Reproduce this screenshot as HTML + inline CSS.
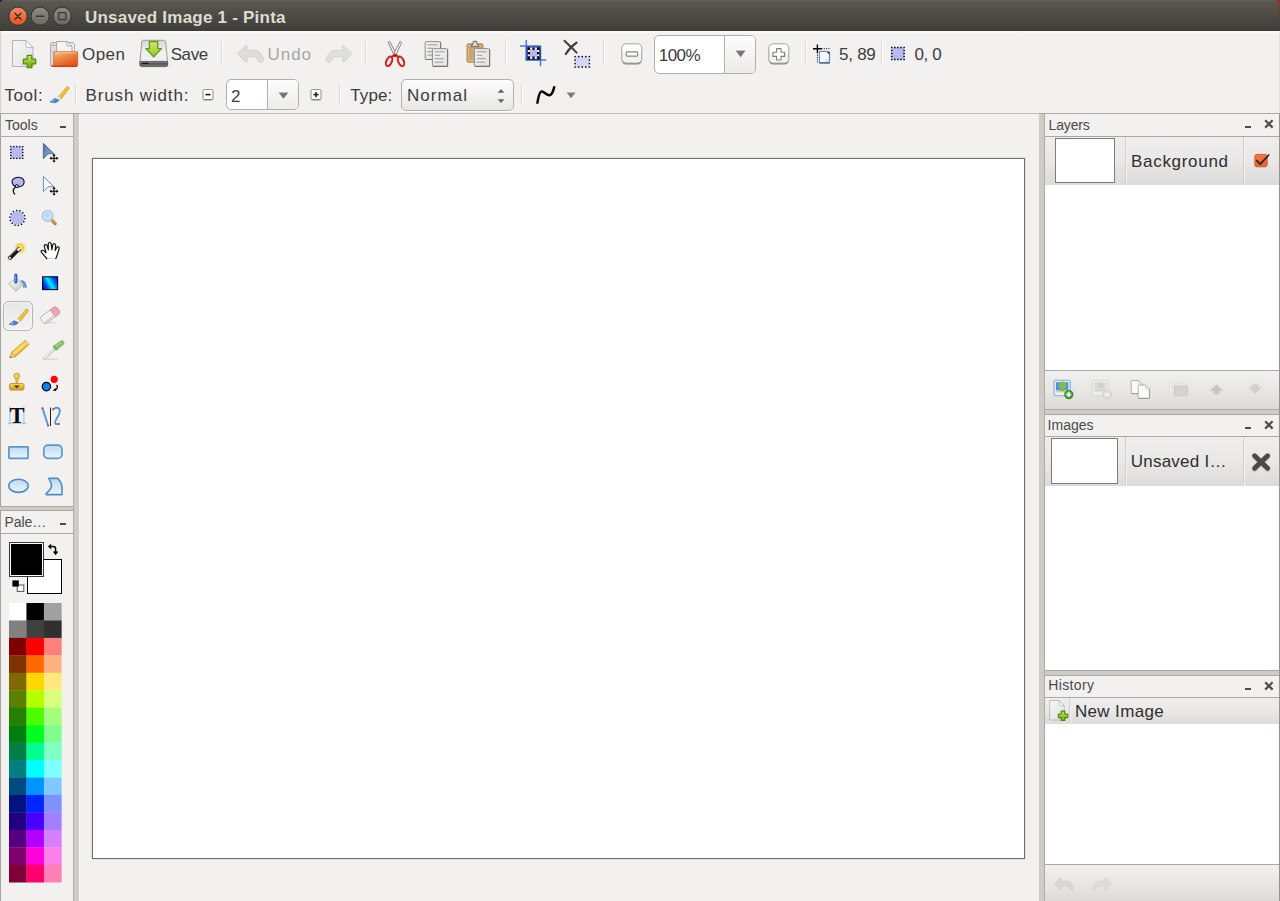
<!DOCTYPE html>
<html lang="en"><head><meta charset="utf-8"><title>Unsaved Image 1 - Pinta</title>
<style>
html,body{margin:0;padding:0;}
body{width:1280px;height:901px;overflow:hidden;background:#f2f1f0;font-family:"Liberation Sans", sans-serif;position:relative;}
#app{position:absolute;left:0;top:0;width:1280px;height:901px;overflow:hidden;background:#f2f1f0;}
#app div,#app svg,#app span{position:absolute;display:block;}
#app svg{overflow:visible;}
.t{white-space:nowrap;}
</style></head><body><div id="app">
<div style="left:0px;top:0px;width:1280px;height:31px;background:linear-gradient(#5b5950 0,#57554d 3px,#403f3a 28px,#3b3a36 29.5px,#302f2c 30px,#2d2c29 31px);border-top:1px solid #60625a;box-sizing:border-box;"></div>
<div style="left:0px;top:0px;width:3px;height:3px;background:radial-gradient(circle at 100% 100%, rgba(0,0,0,0) 0, rgba(0,0,0,0) 2.2px, #2c001e 3.4px);"></div>
<div style="left:1279.3px;top:0px;width:1px;height:31px;background:linear-gradient(#98302a,#6a3832 45%,#4a3e3a);"></div>
<div style="left:1275px;top:0px;width:5px;height:5px;background:radial-gradient(circle at 0% 100%, rgba(0,0,0,0) 0, rgba(0,0,0,0) 3.9px, #9c2e24 5.1px);"></div>
<svg style="left:0px;top:0px" width="80" height="31" viewBox="0 0 80 31"><defs><linearGradient id="g1" x1="0" y1="0" x2="0" y2="1"><stop offset="0" stop-color="#f28a66"/><stop offset="1" stop-color="#e6521b"/></linearGradient>
<linearGradient id="g2" x1="0" y1="0" x2="0" y2="1"><stop offset="0" stop-color="#8b8a82"/><stop offset="1" stop-color="#6a6963"/></linearGradient></defs><circle cx="18" cy="16.2" r="9.1" fill="url(#g1)" stroke="#2f3a36" stroke-width="1"/><path d="M15 13.2 L21 19.2 M21 13.2 L15 19.2" stroke="#3b2a22" stroke-width="1.35" stroke-linecap="round" fill="none"/><circle cx="40.1" cy="16.2" r="9.1" fill="url(#g2)" stroke="#33322e" stroke-width="1"/><circle cx="62.2" cy="16.2" r="9.1" fill="url(#g2)" stroke="#33322e" stroke-width="1"/><path d="M36.4 16.3 L43.8 16.3" stroke="#3a3935" stroke-width="1.5" stroke-linecap="round"/><rect x="58.6" y="12.7" width="7.2" height="7" fill="none" stroke="#3a3935" stroke-width="1.3" rx="0.5"/></svg>
<span class="t" style="left:84.96px;top:8px;font-size:17px;line-height:20px;color:#dfdbd2;letter-spacing:0.227px;font-weight:bold;">Unsaved Image 1 - Pinta</span>
<div style="left:0px;top:31px;width:1280px;height:3px;background:linear-gradient(#fdfdfd 0,#f8f8f7 1.2px,#f2f1f0 3px);"></div>
<div style="left:0px;top:31px;width:1px;height:83px;background:#d6d3d1;"></div>
<div style="left:0px;top:113.4px;width:1px;height:790px;background:#a39f9b;"></div>
<div style="left:1279.2px;top:31px;width:1px;height:83px;background:#eadfde;"></div>
<div style="left:1279.2px;top:113.4px;width:1px;height:790px;background:#9c918f;"></div>
<svg style="left:10px;top:38px" width="28" height="32" viewBox="0 0 28 32"><defs><linearGradient id="g3" x1="0" y1="0" x2="1" y2="1"><stop offset="0" stop-color="#f6f6f6"/><stop offset="1" stop-color="#e2e2e2"/></linearGradient></defs><path d="M2.5 2.5 H16.0 L23.0 9.5 V28.5 H2.5 Z" fill="url(#g3)" stroke="#b4b4b4" stroke-width="1" stroke-linejoin="round"/><path d="M16.0 2.5 V8.5 Q16.0 9.5 17.0 9.5 H23.0 Z" fill="#fdfdfd" stroke="#b4b4b4" stroke-width="0.9" stroke-linejoin="round"/><defs><linearGradient id="g4" x1="0" y1="0" x2="0" y2="1"><stop offset="0" stop-color="#c6e45c"/><stop offset="1" stop-color="#6fa511"/></linearGradient></defs><path d="M17.2 17.3 H21.8 V21.2 H25.7 V25.8 H21.8 V29.7 H17.2 V25.8 H13.3 V21.2 H17.2 Z" fill="url(#g4)" stroke="#4f8a0c" stroke-width="1.2" stroke-linejoin="round"/></svg>
<svg style="left:48px;top:38px" width="32" height="32" viewBox="0 0 32 32"><defs><linearGradient id="g5" x1="0" y1="0" x2="0.6" y2="1"><stop offset="0" stop-color="#f6c98c"/><stop offset="0.45" stop-color="#ec8a4a"/><stop offset="1" stop-color="#e8531c"/></linearGradient>
<linearGradient id="g6" x1="0" y1="0" x2="1" y2="0"><stop offset="0" stop-color="#d8d8d8"/><stop offset="1" stop-color="#f4f4f4"/></linearGradient></defs><path d="M2.5 6 Q2.5 4.5 4 4.5 H24 Q26.5 4.5 26.5 7 V28 H2.5 Z" fill="url(#g6)" stroke="#b0b0b0" stroke-width="1"/><path d="M4.2 7.3 H7.5" stroke="#f0a040" stroke-width="1.2"/><path d="M8.5 3.5 H19 L24 8 V20 H8.5 Z" fill="#f4f4f4" stroke="#a8a8a8" stroke-width="1" stroke-linejoin="round"/><path d="M19 3.5 V8 H24 Z" fill="#fff" stroke="#a8a8a8" stroke-width="0.9" stroke-linejoin="round"/><path d="M5.8 13.8 H29.6 V27.2 Q29.6 28.4 28.4 28.4 H4 Q5.8 27 5.8 25 Z" fill="url(#g5)" stroke="#e0561e" stroke-width="0.8"/><path d="M3.6 28.2 H29" stroke="#d43a10" stroke-width="1.3"/><path d="M6.8 14.8 H28.6" stroke="#f9d9a8" stroke-width="0.9" opacity="0.9"/></svg>
<span class="t" style="left:82.06px;top:45px;font-size:17px;line-height:20px;color:#3c3c3c;letter-spacing:0.44px;font-weight:normal;">Open</span>
<svg style="left:138px;top:38px" width="32" height="32" viewBox="0 0 32 32"><defs><linearGradient id="g7" x1="0" y1="0" x2="0" y2="1"><stop offset="0" stop-color="#d8d8d6"/><stop offset="0.6" stop-color="#f2f2f0"/><stop offset="1" stop-color="#e4e4e2"/></linearGradient>
<linearGradient id="g8" x1="0" y1="0" x2="0" y2="1"><stop offset="0" stop-color="#aaa"/><stop offset="0.35" stop-color="#555"/><stop offset="1" stop-color="#777"/></linearGradient>
<linearGradient id="g9" x1="0" y1="0" x2="0" y2="1"><stop offset="0" stop-color="#cfe86a"/><stop offset="1" stop-color="#93c520"/></linearGradient></defs><path d="M5.2 2.3 H26.2 Q27.4 2.3 27.6 3.5 L29.6 23.6 H1.9 L3.9 3.5 Q4.1 2.3 5.2 2.3 Z" fill="url(#g7)" stroke="#9c9c9a" stroke-width="1"/><path d="M1.8 23.6 H29.7 V26.8 Q29.7 28.6 27.9 28.6 H3.6 Q1.8 28.6 1.8 26.8 Z" fill="url(#g8)" stroke="#4c4c4c" stroke-width="0.8"/><path d="M4.5 25.4 H10" stroke="#111" stroke-width="1.4" stroke-linecap="round"/><path d="M4 19 Q15.7 23 27.5 19" stroke="#fff" stroke-width="1.2" fill="none" opacity="0.8"/><path d="M11.4 3.6 H19.8 V10.6 H23.4 L15.7 18.9 L7.8 10.6 H11.4 Z" fill="url(#g9)" stroke="#5e9c12" stroke-width="1.3" stroke-linejoin="round"/></svg>
<span class="t" style="left:170.72px;top:45px;font-size:17px;line-height:20px;color:#3c3c3c;letter-spacing:-0.44px;font-weight:normal;">Save</span>
<div style="left:221px;top:41px;width:1px;height:23px;background:#dcdad7;"></div>
<div style="left:222px;top:41px;width:1px;height:23px;background:#fbfbfa;"></div>
<svg style="left:236px;top:42px" width="28" height="24" viewBox="0 0 28 24"><g transform="scale(1)"><path d="M1.6 11.7 L9.6 3.6 Q11 2.6 11 4.6 V8.2 H18.5 Q22.4 8.2 24.4 11.4 L27.4 16.3 Q28.6 18.8 26.2 20.2 Q23.6 21.3 22.2 19 L19.8 15.2 Q19.4 14.8 18.6 14.8 H11 V19 Q11 21 9.6 19.9 Z" fill="#dfdcd9" stroke="#d2cfcb" stroke-width="1" stroke-linejoin="round"/></g></svg>
<span class="t" style="left:267.6px;top:45px;font-size:17px;line-height:20px;color:#a8a6a3;letter-spacing:0.9px;font-weight:normal;">Undo</span>
<svg style="left:324px;top:42px" width="30" height="24" viewBox="0 0 30 24"><g transform="scale(1) translate(29.6,0) scale(-1,1)"><path d="M1.6 11.7 L9.6 3.6 Q11 2.6 11 4.6 V8.2 H18.5 Q22.4 8.2 24.4 11.4 L27.4 16.3 Q28.6 18.8 26.2 20.2 Q23.6 21.3 22.2 19 L19.8 15.2 Q19.4 14.8 18.6 14.8 H11 V19 Q11 21 9.6 19.9 Z" fill="#dfe0db" stroke="#d3d5cf" stroke-width="1" stroke-linejoin="round"/></g></svg>
<div style="left:365px;top:41px;width:1px;height:23px;background:#dcdad7;"></div>
<div style="left:366px;top:41px;width:1px;height:23px;background:#fbfbfa;"></div>
<svg style="left:382px;top:38px" width="26" height="32" viewBox="0 0 26 32"><path d="M6.2 4.6 L7.5 3.1 L15.4 17.8 L13 19 Z" fill="#ececec" stroke="#7c7c7a" stroke-width="0.9" stroke-linejoin="round"/><path d="M19.6 4.6 L18.3 3.1 L10.6 17.8 L13 19 Z" fill="#f4f4f4" stroke="#7c7c7a" stroke-width="0.9" stroke-linejoin="round"/><ellipse cx="7.1" cy="23.3" rx="2.7" ry="5" fill="none" stroke="#cc2424" stroke-width="2.1" transform="rotate(24 7.1 23.3)"/><ellipse cx="19" cy="23.3" rx="2.7" ry="5" fill="none" stroke="#cc2424" stroke-width="2.1" transform="rotate(-24 19 23.3)"/><path d="M9.6 19.2 L13 16.6 L16.6 19.2" fill="none" stroke="#cc2424" stroke-width="2.2" stroke-linejoin="round" stroke-linecap="round"/><circle cx="13.1" cy="17.6" r="1.1" fill="#a81c1c"/></svg>
<svg style="left:422px;top:38px" width="28" height="32" viewBox="0 0 28 32"><defs><linearGradient id="g10" x1="0" y1="0" x2="1" y2="1"><stop offset="0" stop-color="#f3f3f3"/><stop offset="1" stop-color="#e2e2e2"/></linearGradient></defs><rect x="3.2" y="3.7" width="15.4" height="17.8" rx="1" fill="url(#g10)" stroke="#8a8a88" stroke-width="1"/><path d="M3.7 21.5 H18.6 V4.2" stroke="#6e6e6c" stroke-width="1.1" fill="none" opacity="0.8"/><path d="M5.4 6.80 H15.66" stroke="#8e8e8e" stroke-width="0.9"/><path d="M5.4 10.25 H11.10" stroke="#8e8e8e" stroke-width="0.9"/><path d="M5.4 13.70 H14.75" stroke="#8e8e8e" stroke-width="0.9"/><path d="M5.4 17.15 H13.84" stroke="#8e8e8e" stroke-width="0.9"/><defs><linearGradient id="g11" x1="0" y1="0" x2="1" y2="1"><stop offset="0" stop-color="#f3f3f3"/><stop offset="1" stop-color="#e2e2e2"/></linearGradient></defs><rect x="10.4" y="10.7" width="15.2" height="17.7" rx="1" fill="url(#g11)" stroke="#8a8a88" stroke-width="1"/><path d="M10.9 28.4 H25.6 V11.2" stroke="#6e6e6c" stroke-width="1.1" fill="none" opacity="0.8"/><path d="M12.600000000000001 13.80 H22.68" stroke="#8e8e8e" stroke-width="0.9"/><path d="M12.600000000000001 17.25 H18.20" stroke="#8e8e8e" stroke-width="0.9"/><path d="M12.600000000000001 20.70 H21.78" stroke="#8e8e8e" stroke-width="0.9"/><path d="M12.600000000000001 24.15 H20.89" stroke="#8e8e8e" stroke-width="0.9"/></svg>
<svg style="left:464px;top:38px" width="28" height="32" viewBox="0 0 28 32"><defs><linearGradient id="g12" x1="0" y1="0" x2="1" y2="0"><stop offset="0" stop-color="#c69a62"/><stop offset="0.5" stop-color="#d2ac7a"/><stop offset="1" stop-color="#bf935a"/></linearGradient></defs><rect x="3" y="5.8" width="16" height="18.4" rx="1.2" fill="url(#g12)" stroke="#b58a50" stroke-width="1"/><rect x="4.6" y="7.4" width="12.8" height="15.2" fill="none" stroke="#e2c69c" stroke-width="0.7"/><path d="M7.4 8.6 V7 H8.6 L9.4 3.4 H12.6 L13.4 7 H14.6 V8.6 Z" fill="#d8d8d8" stroke="#7a7a7a" stroke-width="1.1" stroke-linejoin="round"/><defs><linearGradient id="g13" x1="0" y1="0" x2="1" y2="1"><stop offset="0" stop-color="#f3f3f3"/><stop offset="1" stop-color="#e2e2e2"/></linearGradient></defs><rect x="10.4" y="10.7" width="15.2" height="17.7" rx="1" fill="url(#g13)" stroke="#8a8a88" stroke-width="1"/><path d="M10.9 28.4 H25.6 V11.2" stroke="#6e6e6c" stroke-width="1.1" fill="none" opacity="0.8"/><path d="M12.600000000000001 13.80 H22.68" stroke="#8e8e8e" stroke-width="0.9"/><path d="M12.600000000000001 17.25 H18.20" stroke="#8e8e8e" stroke-width="0.9"/><path d="M12.600000000000001 20.70 H21.78" stroke="#8e8e8e" stroke-width="0.9"/><path d="M12.600000000000001 24.15 H20.89" stroke="#8e8e8e" stroke-width="0.9"/></svg>
<div style="left:505px;top:41px;width:1px;height:23px;background:#dcdad7;"></div>
<div style="left:506px;top:41px;width:1px;height:23px;background:#fbfbfa;"></div>
<svg style="left:518px;top:38px" width="30" height="32" viewBox="0 0 30 32"><path d="M8.3 2 V22.4 M2 8.1 H23" stroke="#4a7ae0" stroke-width="1.5" fill="none"/><path d="M22.5 8 V28.3 M8.3 22.1 H28.3" stroke="#4a7ae0" stroke-width="1.5" fill="none"/><rect x="8.4" y="8.2" width="14.2" height="14" fill="#16357f"/><path d="M7.6 8.9 H22.6 M8.3 8.9 V22.4" stroke="#3a66c8" stroke-width="1.2" fill="none"/><rect x="9.8" y="9.6" width="11.4" height="11.2" fill="#fff"/><rect x="11.6" y="11.4" width="7.8" height="7.6" fill="#b4b4f8"/><rect x="9.75" y="9.55" width="2.3" height="2.3" fill="#000"/><rect x="9.75" y="18.55" width="2.3" height="2.3" fill="#000"/><rect x="14.35" y="9.55" width="2.3" height="2.3" fill="#000"/><rect x="14.35" y="18.55" width="2.3" height="2.3" fill="#000"/><rect x="18.95" y="9.55" width="2.3" height="2.3" fill="#000"/><rect x="18.95" y="18.55" width="2.3" height="2.3" fill="#000"/><rect x="9.75" y="14.05" width="2.3" height="2.3" fill="#000"/><rect x="18.95" y="14.05" width="2.3" height="2.3" fill="#000"/><rect x="9.75" y="9.55" width="2.3" height="2.3" fill="#000"/><rect x="9.75" y="18.55" width="2.3" height="2.3" fill="#000"/><rect x="18.95" y="9.55" width="2.3" height="2.3" fill="#000"/><rect x="18.95" y="18.55" width="2.3" height="2.3" fill="#000"/></svg>
<svg style="left:562px;top:38px" width="30" height="32" viewBox="0 0 30 32"><path d="M2.4 2.8 Q7 7 14.6 14.6" stroke="#3e3e3e" stroke-width="2" stroke-linecap="round" fill="none"/><path d="M14.6 4.6 Q8 9 3.8 16" stroke="#3e3e3e" stroke-width="2.2" stroke-linecap="round" fill="none"/><rect x="13.06" y="18.6" width="14.34" height="10.46" fill="#d6d6f4"/><rect x="12.34" y="17.88" width="1.45" height="1.45" fill="#000"/><rect x="12.34" y="28.33" width="1.45" height="1.45" fill="#000"/><rect x="15.92" y="17.88" width="1.45" height="1.45" fill="#000"/><rect x="15.92" y="28.33" width="1.45" height="1.45" fill="#000"/><rect x="19.50" y="17.88" width="1.45" height="1.45" fill="#000"/><rect x="19.50" y="28.33" width="1.45" height="1.45" fill="#000"/><rect x="23.09" y="17.88" width="1.45" height="1.45" fill="#000"/><rect x="23.09" y="28.33" width="1.45" height="1.45" fill="#000"/><rect x="26.67" y="17.88" width="1.45" height="1.45" fill="#000"/><rect x="26.67" y="28.33" width="1.45" height="1.45" fill="#000"/><rect x="12.34" y="21.36" width="1.45" height="1.45" fill="#000"/><rect x="26.67" y="21.36" width="1.45" height="1.45" fill="#000"/><rect x="12.34" y="24.85" width="1.45" height="1.45" fill="#000"/><rect x="26.67" y="24.85" width="1.45" height="1.45" fill="#000"/></svg>
<div style="left:603px;top:41px;width:1px;height:23px;background:#dcdad7;"></div>
<div style="left:604px;top:41px;width:1px;height:23px;background:#fbfbfa;"></div>
<svg style="left:620px;top:42px" width="24" height="24" viewBox="0 0 24 24"><defs><linearGradient id="g14" x1="0" y1="0" x2="0" y2="1"><stop offset="0" stop-color="#ffffff"/><stop offset="0.5" stop-color="#fbfbfa"/><stop offset="0.55" stop-color="#efefed"/><stop offset="1" stop-color="#f6f6f5"/></linearGradient></defs><rect x="1.8" y="2.8" width="20" height="19.6" rx="4.2" fill="#787874" opacity="0.85"/><rect x="1.8" y="1.8" width="20" height="19.2" rx="4.2" fill="url(#g14)" stroke="#a4a4a0" stroke-width="1"/><rect x="6.2" y="9.9" width="11.4" height="4.2" rx="0.8" fill="#fff" stroke="#868684" stroke-width="1.1"/></svg>
<div style="left:654px;top:34.7px;width:102px;height:39px;border:1px solid #b3afa9;border-radius:5px;background:#fff;box-sizing:border-box;overflow:hidden;"><div style="left:69px;top:0;width:32px;height:37px;border-left:1px solid #b3afa9;background:linear-gradient(#fdfdfd,#ecebe9);"></div></div>
<span class="t" style="left:658.78px;top:46px;font-size:17px;line-height:20px;color:#3c3c3c;letter-spacing:-0.54px;font-weight:normal;">100%</span>
<svg style="left:735px;top:50px" width="12" height="9" viewBox="0 0 12 9"><path d="M0.8 0.8 H10.4 L5.6 7.2 Z" fill="#767676"/><path d="M0.8 0.8 H10.4" stroke="#9a9a9a" stroke-width="0.8" opacity="0.7"/></svg>
<svg style="left:767px;top:42px" width="24" height="24" viewBox="0 0 24 24"><defs><linearGradient id="g15" x1="0" y1="0" x2="0" y2="1"><stop offset="0" stop-color="#ffffff"/><stop offset="0.5" stop-color="#fbfbfa"/><stop offset="0.55" stop-color="#efefed"/><stop offset="1" stop-color="#f6f6f5"/></linearGradient></defs><rect x="1.8" y="2.8" width="20" height="19.6" rx="4.2" fill="#787874" opacity="0.85"/><rect x="1.8" y="1.8" width="20" height="19.2" rx="4.2" fill="url(#g15)" stroke="#a4a4a0" stroke-width="1"/><path d="M9.6 6.6 H14 V10.2 H17.6 V14.4 H14 V18 H9.6 V14.4 H6 V10.2 H9.6 Z" fill="#fff" stroke="#7e7e7c" stroke-width="1.1" stroke-linejoin="round"/></svg>
<div style="left:805px;top:41px;width:1px;height:23px;background:#dcdad7;"></div>
<div style="left:806px;top:41px;width:1px;height:23px;background:#fbfbfa;"></div>
<svg style="left:812px;top:42px" width="20" height="24" viewBox="0 0 20 24"><defs><linearGradient id="g16" x1="0" y1="0" x2="1" y2="1"><stop offset="0" stop-color="#fff"/><stop offset="0.6" stop-color="#f4f6fa"/><stop offset="1" stop-color="#c8d4e8"/></linearGradient></defs><path d="M5.4 10.5 V20.5" stroke="#000" stroke-width="1" stroke-dasharray="1 1.3"/><path d="M9.5 6.75 H18.8" stroke="#000" stroke-width="1" stroke-dasharray="1 1.3"/><path d="M1 6.75 H9.8 M5.4 2.6 V10.8" stroke="#000" stroke-width="1.4"/><path d="M7.4 9.4 H14.6 L17.6 12.4 V20.8 H7.4 Z" fill="url(#g16)" stroke="#5b7bab" stroke-width="1"/><path d="M14.4 9.4 L17.8 12.8 V10.4 Q17.8 9.4 16.8 9.4 Z" fill="#1e3a6e"/><path d="M7.4 21 H17.8" stroke="#3e5e92" stroke-width="1.2"/></svg>
<span class="t" style="left:838.92px;top:45px;font-size:17px;line-height:20px;color:#3c3c3c;letter-spacing:-0.226px;font-weight:normal;">5, 89</span>
<div style="left:881px;top:41px;width:1px;height:23px;background:#dcdad7;"></div>
<div style="left:882px;top:41px;width:1px;height:23px;background:#fbfbfa;"></div>
<svg style="left:889px;top:44px" width="18" height="18" viewBox="0 0 18 18"><rect x="1.9500000000000002" y="2.75" width="13.9" height="13.5" fill="#f8f8fc"/><rect x="2.7" y="3.5" width="12.4" height="12" fill="#b8b8f6"/><rect x="1.95" y="2.75" width="1.5" height="1.5" fill="#000"/><rect x="1.95" y="14.75" width="1.5" height="1.5" fill="#000"/><rect x="5.05" y="2.75" width="1.5" height="1.5" fill="#000"/><rect x="5.05" y="14.75" width="1.5" height="1.5" fill="#000"/><rect x="8.15" y="2.75" width="1.5" height="1.5" fill="#000"/><rect x="8.15" y="14.75" width="1.5" height="1.5" fill="#000"/><rect x="11.25" y="2.75" width="1.5" height="1.5" fill="#000"/><rect x="11.25" y="14.75" width="1.5" height="1.5" fill="#000"/><rect x="14.35" y="2.75" width="1.5" height="1.5" fill="#000"/><rect x="14.35" y="14.75" width="1.5" height="1.5" fill="#000"/><rect x="1.95" y="5.75" width="1.5" height="1.5" fill="#000"/><rect x="14.35" y="5.75" width="1.5" height="1.5" fill="#000"/><rect x="1.95" y="8.75" width="1.5" height="1.5" fill="#000"/><rect x="14.35" y="8.75" width="1.5" height="1.5" fill="#000"/><rect x="1.95" y="11.75" width="1.5" height="1.5" fill="#000"/><rect x="14.35" y="11.75" width="1.5" height="1.5" fill="#000"/></svg>
<span class="t" style="left:914.52px;top:45px;font-size:17px;line-height:20px;color:#3c3c3c;letter-spacing:-0.4px;font-weight:normal;">0, 0</span>
<span class="t" style="left:4.4px;top:86px;font-size:17px;line-height:20px;color:#3c3c3c;letter-spacing:0.6px;font-weight:normal;">Tool:</span>
<svg style="left:48px;top:84px" width="24" height="22" viewBox="0 0 24 22"><defs><linearGradient id="g17" x1="0" y1="0" x2="1" y2="1"><stop offset="0" stop-color="#f8e684"/><stop offset="0.5" stop-color="#ecc53a"/><stop offset="1" stop-color="#d2a018"/></linearGradient></defs><g transform="translate(2,2.8)"><path d="M17 -0.2 Q19.2 -0.5 19 1.9 L11 12.3 L8.6 9.9 Z" fill="url(#g17)" stroke="#c99a1c" stroke-width="0.7" stroke-linejoin="round"/><path d="M8.6 9.9 L11 12.3 L9.2 13.3 L4.6 11.7 Q6.5 10.3 8.6 9.9 Z" fill="#f6f4ec" stroke="#d2cebe" stroke-width="0.5"/><path d="M4.4 11.6 L9.2 13.2 Q7.6 15.5 5.5 15.9 L0.5 15.4 Q-0.4 15.2 0.5 14.6 Q2.6 13.4 4.4 11.6 Z" fill="#4a80cc" stroke="#3c6cb4" stroke-width="0.6" stroke-linejoin="round"/><path d="M4.6 12.8 Q3.4 14 1.8 14.8" stroke="#a4c6ee" stroke-width="1" fill="none"/></g></svg>
<div style="left:75px;top:84px;width:1px;height:20px;background:#dcdad7;"></div>
<div style="left:76px;top:84px;width:1px;height:20px;background:#fbfbfa;"></div>
<span class="t" style="left:85.6px;top:86px;font-size:17px;line-height:20px;color:#3c3c3c;letter-spacing:0.845px;font-weight:normal;">Brush width:</span>
<svg style="left:202px;top:88px" width="12" height="13" viewBox="0 0 12 13"><rect x="1" y="1.6" width="10" height="10" rx="1.2" fill="#fff" stroke="#8e8e8c" stroke-width="1"/><path d="M1.4 11.9 H10.6" stroke="#6e6e6c" stroke-width="0.8"/><path d="M3.4 6.6 H8.6" stroke="#222" stroke-width="1.6"/></svg>
<div style="left:226px;top:78.6px;width:73px;height:31.8px;border:1px solid #b3afa9;border-radius:5px;background:#fff;box-sizing:border-box;overflow:hidden;"><div style="left:40px;top:0;width:32px;height:30px;border-left:1px solid #b3afa9;background:linear-gradient(#fdfdfd,#ecebe9);"></div></div>
<span class="t" style="left:231.0px;top:87px;font-size:17px;line-height:20px;color:#3c3c3c;letter-spacing:-1.44px;font-weight:normal;">2</span>
<svg style="left:278px;top:92px" width="12" height="8" viewBox="0 0 12 8"><path d="M0.8 0.8 H10.200000000000001 L5.5 6.8 Z" fill="#767676"/><path d="M0.8 0.8 H10.200000000000001" stroke="#9a9a9a" stroke-width="0.8" opacity="0.7"/></svg>
<svg style="left:310px;top:88px" width="12" height="13" viewBox="0 0 12 13"><rect x="1" y="1.6" width="10" height="10" rx="1.2" fill="#fff" stroke="#8e8e8c" stroke-width="1"/><path d="M1.4 11.9 H10.6" stroke="#6e6e6c" stroke-width="0.8"/><path d="M3.4 6.6 H8.6" stroke="#222" stroke-width="1.6"/><path d="M6 4 V9.2" stroke="#222" stroke-width="1.6"/></svg>
<div style="left:339px;top:84px;width:1px;height:20px;background:#dcdad7;"></div>
<div style="left:340px;top:84px;width:1px;height:20px;background:#fbfbfa;"></div>
<span class="t" style="left:350.29px;top:86px;font-size:17px;line-height:20px;color:#3c3c3c;letter-spacing:0.075px;font-weight:normal;">Type:</span>
<div style="left:401px;top:78.6px;width:113px;height:32px;border:1px solid #b3afa9;border-radius:5px;background:linear-gradient(#fefefe,#f0efed 60%,#e9e8e6);box-sizing:border-box;box-shadow:0 1px 0 #fff;"></div>
<span class="t" style="left:406.90000000000003px;top:86px;font-size:17px;line-height:20px;color:#3c3c3c;letter-spacing:1.08px;font-weight:normal;">Normal</span>
<svg style="left:496px;top:88px" width="10" height="16" viewBox="0 0 10 16"><path d="M1.6 4.8 L5 1 L8.4 4.8 Z" fill="#666"/><path d="M1.6 11.2 L5 15 L8.4 11.2 Z" fill="#666"/></svg>
<div style="left:521px;top:84px;width:1px;height:20px;background:#dcdad7;"></div>
<div style="left:522px;top:84px;width:1px;height:20px;background:#fbfbfa;"></div>
<svg style="left:534px;top:84px" width="24" height="22" viewBox="0 0 24 22"><path d="M3.4 18.7 C4.4 14 5 8 7.6 7.4 C10 7 12.6 11.6 15.6 11.2 C18.6 10.6 19.4 6 20.2 3.2" fill="none" stroke="#0a0a0a" stroke-width="2.5" stroke-linecap="round" stroke-linejoin="round"/></svg>
<svg style="left:566px;top:92px" width="10" height="7" viewBox="0 0 10 7"><path d="M0.8 0.8 H9.3 L5.05 6.3 Z" fill="#7a7a7a"/><path d="M0.8 0.8 H9.3" stroke="#9a9a9a" stroke-width="0.8" opacity="0.7"/></svg>
<div style="left:0px;top:113.4px;width:80px;height:1px;background:#aca8a3;"></div>
<div style="left:80px;top:113.4px;width:959px;height:1px;background:#c4c0bc;"></div>
<div style="left:1039px;top:113.4px;width:241px;height:1px;background:#aca8a3;"></div>
<div style="left:73px;top:114px;width:6px;height:787px;background:#cfcbc7;border-left:1px solid #b3aeaa;box-sizing:border-box;"></div>
<div style="left:79px;top:114px;width:1px;height:787px;background:#f8f7f7;"></div>
<div style="left:1039px;top:114px;width:6px;height:787px;background:#cfcbc7;border-right:1px solid #b0aba7;box-sizing:border-box;"></div>
<div style="left:0px;top:135.5px;width:73px;height:1px;background:#aca8a3;z-index:3;"></div>
<span class="t" style="left:4.92px;top:117px;font-size:14px;line-height:17px;color:#4a4a4a;letter-spacing:0.045px;font-weight:normal;">Tools</span>
<div style="left:60.4px;top:126.2px;width:5.8px;height:2.2px;background:#4c4c4c;"></div>
<div style="left:0px;top:506px;width:74px;height:1px;background:#aca8a3;"></div>
<div style="left:0px;top:507px;width:73px;height:3px;background:#cfcbc7;"></div>
<div style="left:0px;top:510px;width:74px;height:1px;background:#aca8a3;"></div>
<div style="left:0px;top:532.5px;width:73px;height:1px;background:#aca8a3;z-index:3;"></div>
<span class="t" style="left:4.5px;top:514px;font-size:14px;line-height:17px;color:#4a4a4a;letter-spacing:-0.075px;font-weight:normal;">Pale…</span>
<div style="left:60.4px;top:523.2px;width:5.8px;height:2.2px;background:#4c4c4c;"></div>
<div style="left:2.5px;top:301px;width:30.5px;height:29.8px;border:1.2px solid #b9b5b0;border-radius:5.5px;background:linear-gradient(#e9e8e6,#efeeec 60%,#f2f1f0);box-sizing:border-box;box-shadow:inset 0 0 0 1px rgba(255,255,255,0.45);"></div>
<svg style="left:5px;top:140px" width="24" height="24" viewBox="0 0 24 24"><rect x="5.125" y="5.925" width="13.35" height="13.15" fill="#f8f8fc"/><rect x="5.8" y="6.6" width="12" height="11.8" fill="#b8b8f2"/><rect x="5.12" y="5.92" width="1.35" height="1.35" fill="#000"/><rect x="5.12" y="17.72" width="1.35" height="1.35" fill="#000"/><rect x="8.12" y="5.92" width="1.35" height="1.35" fill="#000"/><rect x="8.12" y="17.72" width="1.35" height="1.35" fill="#000"/><rect x="11.12" y="5.92" width="1.35" height="1.35" fill="#000"/><rect x="11.12" y="17.72" width="1.35" height="1.35" fill="#000"/><rect x="14.12" y="5.92" width="1.35" height="1.35" fill="#000"/><rect x="14.12" y="17.72" width="1.35" height="1.35" fill="#000"/><rect x="17.12" y="5.92" width="1.35" height="1.35" fill="#000"/><rect x="17.12" y="17.72" width="1.35" height="1.35" fill="#000"/><rect x="5.12" y="8.87" width="1.35" height="1.35" fill="#000"/><rect x="17.12" y="8.87" width="1.35" height="1.35" fill="#000"/><rect x="5.12" y="11.82" width="1.35" height="1.35" fill="#000"/><rect x="17.12" y="11.82" width="1.35" height="1.35" fill="#000"/><rect x="5.12" y="14.77" width="1.35" height="1.35" fill="#000"/><rect x="17.12" y="14.77" width="1.35" height="1.35" fill="#000"/></svg>
<svg style="left:38px;top:140px" width="24" height="24" viewBox="0 0 24 24"><defs><linearGradient id="g18" x1="0" y1="0" x2="1" y2="1"><stop offset="0" stop-color="#4f739f"/><stop offset="1" stop-color="#9fb5d0"/></linearGradient></defs><path d="M5.3999999999999995 3.4 L15.8 13.6 L10.0 13.8 L5.3999999999999995 18.6 Z" fill="url(#g18)" stroke="#4a6c98" stroke-width="1" stroke-linejoin="round"/><path d="M12.4 18.2 H19.6 M16 14.6 V21.8" stroke="#000" stroke-width="1.1"/><path d="M20.4 18.2 L18.5 16.5 V19.9 Z" fill="#000"/><path d="M11.6 18.2 L13.5 16.5 V19.9 Z" fill="#000"/><path d="M16.0 22.6 L14.3 20.700000000000003 H17.7 Z" fill="#000"/><path d="M16.0 13.799999999999999 L14.3 15.7 H17.7 Z" fill="#000"/></svg>
<svg style="left:5px;top:173px" width="24" height="24" viewBox="0 0 24 24"><path d="M7.2 10.2 Q6.4 6.6 10 5 Q13.4 3.4 16.6 5 Q19.6 6.6 19 10 Q18.6 12.6 15.6 13.6 Q13 14.6 10.8 13.4 Q7.8 12.6 7.2 10.2 Z" fill="#b6b6f4" stroke="#111" stroke-width="1.1"/><circle cx="11.9" cy="13.1" r="1.5" fill="#dcdcfa" stroke="#111" stroke-width="1"/><path d="M10.6 14 Q7.6 16 8.4 18.6 Q8.8 20 9.6 21" fill="none" stroke="#111" stroke-width="1.3" stroke-linecap="round"/></svg>
<svg style="left:38px;top:173px" width="24" height="24" viewBox="0 0 24 24"><path d="M5.3999999999999995 3.4 L15.8 13.6 L10.0 13.8 L5.3999999999999995 18.6 Z" fill="#fff" stroke="#6d8db8" stroke-width="1" stroke-linejoin="round"/><path d="M12.4 18.2 H19.6 M16 14.6 V21.8" stroke="#000" stroke-width="1.1"/><path d="M20.4 18.2 L18.5 16.5 V19.9 Z" fill="#000"/><path d="M11.6 18.2 L13.5 16.5 V19.9 Z" fill="#000"/><path d="M16.0 22.6 L14.3 20.700000000000003 H17.7 Z" fill="#000"/><path d="M16.0 13.799999999999999 L14.3 15.7 H17.7 Z" fill="#000"/></svg>
<svg style="left:5px;top:206px" width="24" height="24" viewBox="0 0 24 24"><circle cx="12.4" cy="12" r="7.6" fill="#b8b8f2"/><circle cx="12.4" cy="12" r="7.5" fill="none" stroke="#f4f3f8" stroke-width="1.3"/><circle cx="12.4" cy="12" r="7.5" fill="none" stroke="#000" stroke-width="1.35" stroke-dasharray="1.4 1.965"/></svg>
<svg style="left:38px;top:206px" width="24" height="24" viewBox="0 0 24 24"><defs><radialGradient id="g19" cx="0.45" cy="0.4" r="0.6"><stop offset="0" stop-color="#b7d4f0"/><stop offset="0.7" stop-color="#cfe2f6"/><stop offset="1" stop-color="#a9cbee"/></radialGradient></defs><path d="M14.2 14.4 L17.2 17.6" stroke="#c07a28" stroke-width="3.2" stroke-linecap="round"/><path d="M14.4 14 L17.2 17" stroke="#e0a860" stroke-width="1.1" stroke-linecap="round"/><circle cx="9.6" cy="9.9" r="5.5" fill="url(#g19)" stroke="#a6c8ee" stroke-width="1.2"/></svg>
<svg style="left:5px;top:238px" width="24" height="24" viewBox="0 0 24 24"><polygon points="15.10,3.40 15.98,6.62 18.35,4.27 17.50,7.50 20.73,6.65 18.38,9.02 21.60,9.90 18.38,10.78 20.73,13.15 17.50,12.30 18.35,15.53 15.98,13.18 15.10,16.40 14.22,13.18 11.85,15.53 12.70,12.30 9.47,13.15 11.82,10.78 8.60,9.90 11.82,9.02 9.47,6.65 12.70,7.50 11.85,4.27 14.22,6.62" fill="#f6c21a"/><circle cx="15.1" cy="9.9" r="2.8" fill="#fbe07a"/><path d="M4.9 20 L14.2 10.9" stroke="#161616" stroke-width="4" stroke-linecap="round"/><path d="M4.6 18.6 L12.6 10.8" stroke="#6e6e6e" stroke-width="1" stroke-linecap="round"/><path d="M13.3 11.9 L14.9 10.3" stroke="#fff" stroke-width="2.3" stroke-linecap="round"/><ellipse cx="4.7" cy="20.2" rx="1.1" ry="1.7" fill="#cfcfcf" transform="rotate(45 4.7 20.2)"/></svg>
<svg style="left:38px;top:238px" width="24" height="24" viewBox="0 0 24 24"><g transform="translate(0,21.4) scale(1,0.925) translate(0,-21.4)"><path d="M9.4 21.4 L4.2 14.6 Q2.4 12.6 3.6 11.8 Q5 11 6.6 12.8 L8 14.2 L6.4 7.6 Q6 5.6 7.4 5.4 Q8.6 5.2 9.2 7 L10.4 11.2 L10.2 4.8 Q10.2 3.2 11.6 3.2 Q13 3.2 13.2 4.8 L13.8 10.8 L14.8 5.6 Q15.2 4.2 16.4 4.4 Q17.8 4.8 17.6 6.4 L17.2 11.8 L18.6 8.6 Q19.4 7.4 20.4 7.8 Q21.4 8.4 21 10 Q20 15 17.4 21.4 Z" fill="#fff" stroke="#111" stroke-width="1.2" stroke-linejoin="round"/><path d="M9 21.6 H17.8" stroke="#fff" stroke-width="1.8"/></g></svg>
<svg style="left:5px;top:271px" width="24" height="24" viewBox="0 0 24 24"><defs><linearGradient id="g20" x1="0" y1="0" x2="1" y2="1"><stop offset="0" stop-color="#fff"/><stop offset="1" stop-color="#c4c4c4"/></linearGradient></defs><path d="M16.2 9.6 Q21.6 9.6 21.2 17.2 Q19.6 14.6 18.6 17 Q18.6 12.6 15.6 11 Z" fill="#5a9bdc" stroke="#4a8acc" stroke-width="0.6"/><path d="M3.6 13 L11 7.2 L18.4 13 L11 20.4 Z" fill="url(#g20)" stroke="#b4b4b4" stroke-width="0.9" stroke-linejoin="round"/><path d="M10.8 4.2 V11" stroke="#2a62c4" stroke-width="3.2" stroke-linecap="round"/><path d="M10.3 4.6 V10" stroke="#7aa8f0" stroke-width="1" stroke-linecap="round"/></svg>
<svg style="left:38px;top:271px" width="24" height="24" viewBox="0 0 24 24"><defs><linearGradient id="g21" x1="0" y1="0.75" x2="1" y2="0.25"><stop offset="0" stop-color="#0010e8"/><stop offset="0.25" stop-color="#0060f8"/><stop offset="0.5" stop-color="#00f4fc"/><stop offset="0.75" stop-color="#0070f8"/><stop offset="1" stop-color="#0018e8"/></linearGradient></defs><rect x="4.6" y="5.8" width="15" height="12.8" fill="url(#g21)" stroke="#0a0a18" stroke-width="1.1"/></svg>
<svg style="left:5px;top:304px" width="24" height="24" viewBox="0 0 24 24"><defs><linearGradient id="g22" x1="0" y1="0" x2="1" y2="1"><stop offset="0" stop-color="#f8e684"/><stop offset="0.5" stop-color="#ecc53a"/><stop offset="1" stop-color="#d2a018"/></linearGradient></defs><g transform="translate(4.2,5.2)"><path d="M17 -0.2 Q19.2 -0.5 19 1.9 L11 12.3 L8.6 9.9 Z" fill="url(#g22)" stroke="#c99a1c" stroke-width="0.7" stroke-linejoin="round"/><path d="M8.6 9.9 L11 12.3 L9.2 13.3 L4.6 11.7 Q6.5 10.3 8.6 9.9 Z" fill="#f6f4ec" stroke="#d2cebe" stroke-width="0.5"/><path d="M4.4 11.6 L9.2 13.2 Q7.6 15.5 5.5 15.9 L0.5 15.4 Q-0.4 15.2 0.5 14.6 Q2.6 13.4 4.4 11.6 Z" fill="#4a80cc" stroke="#3c6cb4" stroke-width="0.6" stroke-linejoin="round"/><path d="M4.6 12.8 Q3.4 14 1.8 14.8" stroke="#a4c6ee" stroke-width="1" fill="none"/></g></svg>
<svg style="left:38px;top:304px" width="24" height="24" viewBox="0 0 24 24"><ellipse cx="12.4" cy="18.8" rx="7" ry="0.8" fill="#dcdad7"/><g transform="translate(12.2 11.2) rotate(-37)"><rect x="-10" y="-4.3" width="20" height="8.6" rx="2.8" fill="#f3f3f3" stroke="#b4b4b4" stroke-width="0.9"/><path d="M3 -4.3 H7.2 Q10 -4.3 10 -1.5 V1.5 Q10 4.3 7.2 4.3 H3 Z" fill="#f2a2b4" stroke="#dc8ea0" stroke-width="0.7"/><path d="M-8.6 2.6 H3" stroke="#d6d6d6" stroke-width="2"/></g></svg>
<svg style="left:5px;top:338px" width="24" height="24" viewBox="0 0 24 24"><defs><linearGradient id="g23" x1="0" y1="0" x2="0" y2="1"><stop offset="0" stop-color="#e9a934"/><stop offset="0.3" stop-color="#fbe66c"/><stop offset="0.6" stop-color="#f7d94e"/><stop offset="1" stop-color="#dd9a2a"/></linearGradient></defs><g transform="translate(14 11.6) scale(0.9) translate(-13 -12) rotate(-41.5 13 12)"><rect x="4.4" y="8.8" width="20.6" height="6.4" rx="1.2" fill="url(#g23)" stroke="#d89a30" stroke-width="0.8"/><ellipse cx="24.2" cy="12" rx="1.6" ry="3.1" fill="#f6d8b8" stroke="#e0a040" stroke-width="0.7"/><path d="M4.6 8.8 L-0.6 12 L4.6 15.2 Z" fill="#f4c8a0" stroke="#c88a38" stroke-width="0.7" stroke-linejoin="round"/><path d="M1 11 L-0.8 12 L1 13 Z" fill="#6a4a10"/></g></svg>
<svg style="left:38px;top:338px" width="24" height="24" viewBox="0 0 24 24"><ellipse cx="13" cy="21.2" rx="8" ry="0.8" fill="#dad8d5"/><path d="M16.6 10.4 L6.4 20.2" stroke="#cdcdcd" stroke-width="3.4" stroke-linecap="round"/><path d="M16 10.2 L6.6 19.4" stroke="#efefef" stroke-width="1.5" stroke-linecap="round"/><path d="M18 9.4 L23.6 5" stroke="#84be6e" stroke-width="5.4" stroke-linecap="round"/><path d="M16 8.2 L19 11.4" stroke="#7ab466" stroke-width="2" stroke-linecap="round"/><path d="M18.6 8 L23 4.6" stroke="#a4d48e" stroke-width="1.5" stroke-linecap="round"/></svg>
<svg style="left:5px;top:371px" width="24" height="24" viewBox="0 0 24 24"><defs><linearGradient id="g24" x1="0" y1="0" x2="0" y2="1"><stop offset="0" stop-color="#f8e28a"/><stop offset="0.5" stop-color="#eab92e"/><stop offset="1" stop-color="#d49a1c"/></linearGradient></defs><path d="M10.6 6.6 Q10.6 8.4 11.2 12.8 H12.6 Q13.2 8.4 13.2 6.6 Z" fill="#e8bc3c" stroke="#c89a28" stroke-width="0.6"/><circle cx="11.8" cy="5" r="2.9" fill="#f0cc58" stroke="#c89a28" stroke-width="0.8"/><rect x="4.6" y="12.6" width="14.4" height="6.2" rx="1.4" fill="url(#g24)" stroke="#c08a1a" stroke-width="0.9"/><path d="M8.8 14.6 H14.8 L11.8 17.2 Z" fill="#4a3608"/><path d="M5.4 19.3 H18.2" stroke="#b89a58" stroke-width="0.8" opacity="0.6"/></svg>
<svg style="left:38px;top:371px" width="24" height="24" viewBox="0 0 24 24"><circle cx="16.2" cy="8.3" r="3.6" fill="#ff0000"/><circle cx="8.4" cy="15.6" r="4.2" fill="#0084ff" stroke="#000" stroke-width="1.2"/><path d="M18.6 13.8 Q20.6 16.6 17.6 18.8" fill="none" stroke="#000" stroke-width="1.2"/><path d="M14.6 19.4 L17.8 17 L18.2 20 Z" fill="#000"/></svg>
<svg style="left:5px;top:404px" width="24" height="24" viewBox="0 0 24 24"><path d="M4.9 2.2 V20.6 M18.9 2.2 V20.6 M3 19.2 H21.6" stroke="#9cbcf0" stroke-width="1" fill="none"/><text x="11.9" y="18.9" font-family="'Liberation Serif', serif" font-weight="bold" font-size="22.5" text-anchor="middle" fill="#0a0a0a">T</text></svg>
<svg style="left:38px;top:404px" width="24" height="24" viewBox="0 0 24 24"><path d="M4.5 4.4 L10 21.2" stroke="#5a94ea" stroke-width="1.9" stroke-linecap="round"/><path d="M12.5 3.6 V22" stroke="#222" stroke-width="1"/><path d="M15.2 5.2 Q19 2.6 21.4 5 Q22.8 8 19.6 13 Q16.2 18.4 17.4 19.6 Q18.6 20.4 20.6 20" fill="none" stroke="#5a94d4" stroke-width="1.9" stroke-linecap="round"/><circle cx="4.5" cy="4.2" r="1" fill="#f02848"/><circle cx="10" cy="21.4" r="1" fill="#f02848"/><circle cx="15.2" cy="5.2" r="1" fill="#f02848"/><circle cx="20.8" cy="20" r="1" fill="#f02848"/></svg>
<svg style="left:5px;top:440px" width="24" height="24" viewBox="0 0 24 24"><defs><linearGradient id="g25" x1="0" y1="0" x2="0" y2="1"><stop offset="0" stop-color="#bcdaf2"/><stop offset="1" stop-color="#eaf4fc"/></linearGradient></defs><rect x="3.9" y="6.8" width="19.2" height="11.6" rx="0.6" fill="url(#g25)" stroke="#5a96ca" stroke-width="1.7"/></svg>
<svg style="left:38px;top:440px" width="24" height="24" viewBox="0 0 24 24"><defs><linearGradient id="g26" x1="0" y1="0" x2="0" y2="1"><stop offset="0" stop-color="#bcdaf2"/><stop offset="1" stop-color="#eaf4fc"/></linearGradient></defs><rect x="5.8" y="5.2" width="18.2" height="13.2" rx="4.2" fill="url(#g26)" stroke="#5a96ca" stroke-width="1.7"/></svg>
<svg style="left:5px;top:474px" width="24" height="24" viewBox="0 0 24 24"><defs><linearGradient id="g27" x1="0" y1="0" x2="0" y2="1"><stop offset="0" stop-color="#bcdaf2"/><stop offset="1" stop-color="#eaf4fc"/></linearGradient></defs><ellipse cx="13.5" cy="11.8" rx="9.8" ry="6.6" fill="url(#g27)" stroke="#4f8cc4" stroke-width="1.6"/></svg>
<svg style="left:38px;top:474px" width="24" height="24" viewBox="0 0 24 24"><defs><linearGradient id="g28" x1="0" y1="0" x2="0" y2="1"><stop offset="0" stop-color="#bcdaf2"/><stop offset="1" stop-color="#eaf4fc"/></linearGradient></defs><path d="M10.8 4.4 H19.6 Q23.8 8.4 24 13.4 V20.6 H8.4 Q7.6 20.2 8.4 19.4 Q14.4 14 13.4 10.6 Q12.6 7.4 10.8 4.4 Z" fill="url(#g28)" stroke="#4f8cc4" stroke-width="1.6" stroke-linejoin="round"/></svg>
<div style="left:27px;top:559px;width:35px;height:35px;background:#fff;border:1px solid #000;box-sizing:border-box;"></div>
<div style="left:9px;top:542px;width:35px;height:35px;background:#000;border:1px solid #3a3a3a;box-sizing:border-box;box-shadow:inset 0 0 0 1px #fff;"></div>
<svg style="left:47px;top:543px" width="13" height="13" viewBox="0 0 13 13"><path d="M2.6 3.6 H6.4 Q8.6 3.6 8.6 6 V9.4" fill="none" stroke="#000" stroke-width="1.5"/><path d="M0.8 3.6 L4.2 0.8 V6.4 Z" fill="#000"/><path d="M8.6 12.2 L5.8 8.6 H11.4 Z" fill="#000"/></svg>
<svg style="left:11px;top:579px" width="14" height="14" viewBox="0 0 14 14"><rect x="6.2" y="6" width="6.6" height="6.4" fill="#fff" stroke="#555" stroke-width="1"/><rect x="1.4" y="1.4" width="6.4" height="6.2" fill="#000"/></svg>
<svg style="left:9.3px;top:603.3px" width="53" height="280" viewBox="0 0 53 280"><rect x="0.0" y="0.0" width="17.75" height="17.75" fill="rgb(255,255,255)"/><rect x="17.45" y="0.0" width="17.75" height="17.75" fill="rgb(0,0,0)"/><rect x="34.9" y="0.0" width="17.75" height="17.75" fill="rgb(160,160,160)"/><rect x="0.0" y="17.45" width="17.75" height="17.75" fill="rgb(128,128,128)"/><rect x="17.45" y="17.45" width="17.75" height="17.75" fill="rgb(64,64,64)"/><rect x="34.9" y="17.45" width="17.75" height="17.75" fill="rgb(48,48,48)"/><rect x="0.0" y="34.9" width="17.75" height="17.75" fill="rgb(127,0,0)"/><rect x="17.45" y="34.9" width="17.75" height="17.75" fill="rgb(255,0,0)"/><rect x="34.9" y="34.9" width="17.75" height="17.75" fill="rgb(255,127,127)"/><rect x="0.0" y="52.35" width="17.75" height="17.75" fill="rgb(127,51,0)"/><rect x="17.45" y="52.35" width="17.75" height="17.75" fill="rgb(255,106,0)"/><rect x="34.9" y="52.35" width="17.75" height="17.75" fill="rgb(255,178,127)"/><rect x="0.0" y="69.8" width="17.75" height="17.75" fill="rgb(127,106,0)"/><rect x="17.45" y="69.8" width="17.75" height="17.75" fill="rgb(255,216,0)"/><rect x="34.9" y="69.8" width="17.75" height="17.75" fill="rgb(255,233,127)"/><rect x="0.0" y="87.25" width="17.75" height="17.75" fill="rgb(91,127,0)"/><rect x="17.45" y="87.25" width="17.75" height="17.75" fill="rgb(182,255,0)"/><rect x="34.9" y="87.25" width="17.75" height="17.75" fill="rgb(218,255,127)"/><rect x="0.0" y="104.7" width="17.75" height="17.75" fill="rgb(38,127,0)"/><rect x="17.45" y="104.7" width="17.75" height="17.75" fill="rgb(76,255,0)"/><rect x="34.9" y="104.7" width="17.75" height="17.75" fill="rgb(165,255,127)"/><rect x="0.0" y="122.15" width="17.75" height="17.75" fill="rgb(0,127,14)"/><rect x="17.45" y="122.15" width="17.75" height="17.75" fill="rgb(0,255,33)"/><rect x="34.9" y="122.15" width="17.75" height="17.75" fill="rgb(127,255,142)"/><rect x="0.0" y="139.6" width="17.75" height="17.75" fill="rgb(0,127,70)"/><rect x="17.45" y="139.6" width="17.75" height="17.75" fill="rgb(0,255,144)"/><rect x="34.9" y="139.6" width="17.75" height="17.75" fill="rgb(127,255,197)"/><rect x="0.0" y="157.05" width="17.75" height="17.75" fill="rgb(0,127,127)"/><rect x="17.45" y="157.05" width="17.75" height="17.75" fill="rgb(0,255,255)"/><rect x="34.9" y="157.05" width="17.75" height="17.75" fill="rgb(127,255,255)"/><rect x="0.0" y="174.5" width="17.75" height="17.75" fill="rgb(0,74,127)"/><rect x="17.45" y="174.5" width="17.75" height="17.75" fill="rgb(0,148,255)"/><rect x="34.9" y="174.5" width="17.75" height="17.75" fill="rgb(127,201,255)"/><rect x="0.0" y="191.95" width="17.75" height="17.75" fill="rgb(0,19,127)"/><rect x="17.45" y="191.95" width="17.75" height="17.75" fill="rgb(0,38,255)"/><rect x="34.9" y="191.95" width="17.75" height="17.75" fill="rgb(127,146,255)"/><rect x="0.0" y="209.4" width="17.75" height="17.75" fill="rgb(33,0,127)"/><rect x="17.45" y="209.4" width="17.75" height="17.75" fill="rgb(72,0,255)"/><rect x="34.9" y="209.4" width="17.75" height="17.75" fill="rgb(161,127,255)"/><rect x="0.0" y="226.85" width="17.75" height="17.75" fill="rgb(87,0,127)"/><rect x="17.45" y="226.85" width="17.75" height="17.75" fill="rgb(178,0,255)"/><rect x="34.9" y="226.85" width="17.75" height="17.75" fill="rgb(214,127,255)"/><rect x="0.0" y="244.3" width="17.75" height="17.75" fill="rgb(127,0,110)"/><rect x="17.45" y="244.3" width="17.75" height="17.75" fill="rgb(255,0,220)"/><rect x="34.9" y="244.3" width="17.75" height="17.75" fill="rgb(255,127,237)"/><rect x="0.0" y="261.75" width="17.75" height="17.75" fill="rgb(127,0,55)"/><rect x="17.45" y="261.75" width="17.75" height="17.75" fill="rgb(255,0,110)"/><rect x="34.9" y="261.75" width="17.75" height="17.75" fill="rgb(255,127,182)"/></svg>
<div style="left:92px;top:158px;width:933px;height:701px;background:#fff;border:1px solid #6e6e6e;box-sizing:border-box;box-shadow:0 0 2px rgba(0,0,0,0.18);"></div>
<div style="left:1045px;top:135.5px;width:234px;height:1px;background:#aca8a3;z-index:3;"></div>
<span class="t" style="left:1048.6px;top:117px;font-size:14px;line-height:17px;color:#4a4a4a;letter-spacing:-0.168px;font-weight:normal;">Layers</span>
<div style="left:1245px;top:126.2px;width:6px;height:2.2px;background:#4c4c4c;"></div>
<svg style="left:1263.6px;top:119.3px" width="10" height="10" viewBox="0 0 10 10"><path d="M1.2 1.2 L8.6 8.6 M8.6 1.2 L1.2 8.6" stroke="#4c4c4c" stroke-width="2.2" fill="none"/></svg>
<div style="left:1045px;top:136px;width:234px;height:234px;background:#fff;"></div>
<div style="left:1045px;top:136px;width:234px;height:49px;background:linear-gradient(#efeeec,#e9e8e6 50%,#dddbd9);"></div>
<div style="left:1055px;top:138px;width:60px;height:45px;background:#fff;border:1px solid #7c7c7c;box-sizing:border-box;"></div>
<div style="left:1125px;top:136px;width:1px;height:49px;background:#d2d0cd;"></div>
<div style="left:1126px;top:136px;width:1px;height:49px;background:#f2f1ef;"></div>
<div style="left:1243px;top:136px;width:1px;height:49px;background:#d2d0cd;"></div>
<div style="left:1244px;top:136px;width:1px;height:49px;background:#f2f1ef;"></div>
<span class="t" style="left:1131.02px;top:152px;font-size:17px;line-height:20px;color:#2e2e2e;letter-spacing:0.7px;font-weight:normal;">Background</span>
<svg style="left:1253px;top:151px" width="20" height="18" viewBox="0 0 20 18"><defs><linearGradient id="g29" x1="0" y1="0" x2="0" y2="1"><stop offset="0" stop-color="#f07a48"/><stop offset="1" stop-color="#e8602a"/></linearGradient></defs><rect x="1.8" y="3.4" width="12.4" height="12.4" rx="2.2" fill="url(#g29)" stroke="#d2531f" stroke-width="0.9"/><path d="M3.8 9.6 L7.2 13.2 L15.8 4" fill="none" stroke="#2a2622" stroke-width="1.7" stroke-linejoin="round" stroke-linecap="round"/></svg>
<div style="left:1045px;top:370px;width:234px;height:1px;background:#aca8a3;"></div>
<div style="left:1045px;top:371px;width:234px;height:38px;background:linear-gradient(#f1f0ee,#e6e5e2 60%,#dcdad7);"></div>
<div style="left:1045px;top:409px;width:234px;height:1px;background:#aca8a3;"></div>
<div style="left:1045px;top:410px;width:234px;height:4.3px;background:#cfcbc7;"></div>
<div style="left:1045px;top:414.3px;width:234px;height:1px;background:#aca8a3;"></div>
<svg style="left:1052px;top:378px" width="24" height="24" viewBox="0 0 24 24"><defs><radialGradient id="g30" cx="0.4" cy="0.35" r="0.7"><stop offset="0" stop-color="#6cc444"/><stop offset="1" stop-color="#2a8a18"/></radialGradient></defs><rect x="2" y="2.2" width="16.4" height="15.6" rx="1.8" fill="#e4edfb" stroke="#86aaea" stroke-width="1.1"/><rect x="4" y="4.2" width="12.4" height="8" fill="#5a8ee0"/><rect x="4" y="12" width="12.4" height="3.6" fill="#b4dc9c"/><rect x="4" y="14.4" width="12.4" height="1.6" fill="#eef4e8"/><circle cx="10.6" cy="7.4" r="3.8" fill="#70c452"/><path d="M9.4 10.8 H11.8 L12.6 13.2 H8.6 Z" fill="#d88a48"/><circle cx="16.8" cy="16.6" r="4.1" fill="url(#g30)" stroke="#1f7a12" stroke-width="0.8"/><path d="M14.4 16.6 H19.2 M16.8 14.2 V19" stroke="#fff" stroke-width="1.8"/></svg>
<svg style="left:1090px;top:378px" width="24" height="24" viewBox="0 0 24 24"><rect x="2.3" y="2.2" width="16.2" height="15.6" rx="1.8" fill="#eeedeb" stroke="#dad8d5" stroke-width="1.1"/><rect x="4.3" y="4.2" width="12.2" height="9.4" fill="#dddcd9"/><circle cx="10.6" cy="7.8" r="3.4" fill="#d2d1ce"/><path d="M5 12.6 H16" stroke="#cfcecb" stroke-width="1"/><circle cx="17" cy="16.6" r="4.1" fill="#e3e1de" stroke="#cbc9c5" stroke-width="0.9"/><path d="M14.7 16.6 H19.3" stroke="#f8f7f5" stroke-width="1.7"/></svg>
<svg style="left:1128px;top:378px" width="24" height="24" viewBox="0 0 24 24"><path d="M4.0 2.4 H10.600000000000001 L14.399999999999999 6.199999999999999 V14.8 Q14.399999999999999 15.6 13.600000000000001 15.6 H4.0 Q3.2 15.6 3.2 14.8 V3.2 Q3.2 2.4 4.0 2.4 Z" fill="#fbfbfb" stroke="#b2b0ac" stroke-width="1"/><path d="M3.6 15.700000000000001 H13.8 Q14.5 15.700000000000001 14.5 14.8 V6.4" fill="none" stroke="#9a9894" stroke-width="0.9"/><path d="M10.600000000000001 2.4 V6.199999999999999 H14.399999999999999" fill="none" stroke="#d0ceca" stroke-width="0.8"/><path d="M11.0 7.1 H17.6 L21.4 10.899999999999999 V19.5 Q21.4 20.299999999999997 20.6 20.299999999999997 H11.0 Q10.2 20.299999999999997 10.2 19.5 V7.8999999999999995 Q10.2 7.1 11.0 7.1 Z" fill="#fbfbfb" stroke="#b2b0ac" stroke-width="1"/><path d="M10.6 20.4 H20.799999999999997 Q21.5 20.4 21.5 19.5 V11.1" fill="none" stroke="#9a9894" stroke-width="0.9"/><path d="M17.6 7.1 V10.899999999999999 H21.4" fill="none" stroke="#d0ceca" stroke-width="0.8"/></svg>
<svg style="left:1167px;top:378px" width="24" height="24" viewBox="0 0 24 24"><rect x="2.6" y="3.4" width="13" height="11" fill="#efeeec" stroke="#e3e1de" stroke-width="0.9"/><rect x="5.4" y="5.6" width="12.6" height="10.4" fill="#e9e8e5" stroke="#dedcd9" stroke-width="0.8"/><rect x="7.4" y="8" width="13.2" height="9.8" fill="#d5d4d1" stroke="#cbcac6" stroke-width="0.8"/></svg>
<svg style="left:1205px;top:378px" width="24" height="24" viewBox="0 0 24 24"><path d="M11.5 6.2 L18.2 13 H14.4 V16 H8.6 V13 H4.8 Z" fill="#c6c7c9" stroke="#d4d4d4" stroke-width="0.8" stroke-linejoin="round"/></svg>
<svg style="left:1243px;top:378px" width="24" height="24" viewBox="0 0 24 24"><path d="M12 16 L18.8 9.2 H15 V6.4 H9.2 V9.2 H5.4 Z" fill="#cfcfce" stroke="#d8d8d6" stroke-width="0.8" stroke-linejoin="round"/></svg>
<div style="left:1045px;top:436.4px;width:234px;height:1px;background:#aca8a3;z-index:3;"></div>
<span class="t" style="left:1047.58px;top:417px;font-size:14px;line-height:17px;color:#4a4a4a;letter-spacing:0.024px;font-weight:normal;">Images</span>
<div style="left:1245px;top:427.09999999999997px;width:6px;height:2.2px;background:#4c4c4c;"></div>
<svg style="left:1263.6px;top:420.2px" width="10" height="10" viewBox="0 0 10 10"><path d="M1.2 1.2 L8.6 8.6 M8.6 1.2 L1.2 8.6" stroke="#4c4c4c" stroke-width="2.2" fill="none"/></svg>
<div style="left:1045px;top:437px;width:234px;height:233px;background:#fff;"></div>
<div style="left:1045px;top:437px;width:234px;height:49px;background:linear-gradient(#efeeec,#e9e8e6 50%,#dddbd9);"></div>
<div style="left:1051px;top:438px;width:67px;height:46px;background:#fff;border:1px solid #7c7c7c;box-sizing:border-box;"></div>
<div style="left:1125px;top:437px;width:1px;height:49px;background:#d2d0cd;"></div>
<div style="left:1126px;top:437px;width:1px;height:49px;background:#f2f1ef;"></div>
<div style="left:1243px;top:437px;width:1px;height:49px;background:#d2d0cd;"></div>
<div style="left:1244px;top:437px;width:1px;height:49px;background:#f2f1ef;"></div>
<span class="t" style="left:1130.66px;top:452px;font-size:17px;line-height:20px;color:#2e2e2e;letter-spacing:0.247px;font-weight:normal;">Unsaved I…</span>
<svg style="left:1250px;top:451px" width="22" height="22" viewBox="0 0 22 22"><path d="M4.6 5 L17.6 17.4 M17.6 5 L4.6 17.4" stroke="#cfcdc9" stroke-width="5" stroke-linecap="round" transform="translate(0,1.3)"/><path d="M4.6 4.8 L17.6 17.2 M17.6 4.8 L4.6 17.2" stroke="#4b4a46" stroke-width="5" stroke-linecap="round"/></svg>
<div style="left:1045px;top:670px;width:234px;height:1px;background:#aca8a3;"></div>
<div style="left:1045px;top:671px;width:234px;height:3.7px;background:#cfcbc7;"></div>
<div style="left:1045px;top:674.7px;width:234px;height:1px;background:#aca8a3;"></div>
<div style="left:1045px;top:696.8px;width:234px;height:1px;background:#aca8a3;z-index:3;"></div>
<span class="t" style="left:1048.28px;top:677px;font-size:14px;line-height:17px;color:#4a4a4a;letter-spacing:0.344px;font-weight:normal;">History</span>
<div style="left:1245px;top:687.5px;width:6px;height:2.2px;background:#4c4c4c;"></div>
<svg style="left:1263.6px;top:680.5999999999999px" width="10" height="10" viewBox="0 0 10 10"><path d="M1.2 1.2 L8.6 8.6 M8.6 1.2 L1.2 8.6" stroke="#4c4c4c" stroke-width="2.2" fill="none"/></svg>
<div style="left:1045px;top:698px;width:234px;height:166px;background:#fff;"></div>
<div style="left:1045px;top:698px;width:234px;height:26px;background:linear-gradient(#efeeec,#e9e8e6 50%,#dddbd9);"></div>
<svg style="left:1048px;top:699px" width="22" height="24" viewBox="0 0 22 24"><defs><linearGradient id="g31" x1="0" y1="0" x2="1" y2="1"><stop offset="0" stop-color="#f6f6f6"/><stop offset="1" stop-color="#e2e2e2"/></linearGradient></defs><path d="M1.7 1.5 H11.2 L16.2 6.5 V21.0 H1.7 Z" fill="url(#g31)" stroke="#bdbdbd" stroke-width="1" stroke-linejoin="round"/><path d="M11.2 1.5 V5.5 Q11.2 6.5 12.2 6.5 H16.2 Z" fill="#fdfdfd" stroke="#bdbdbd" stroke-width="0.9" stroke-linejoin="round"/><defs><linearGradient id="g32" x1="0" y1="0" x2="0" y2="1"><stop offset="0" stop-color="#c6e45c"/><stop offset="1" stop-color="#6fa511"/></linearGradient></defs><path d="M13.2 12.100000000000001 H16.8 V15.0 H19.7 V18.6 H16.8 V21.5 H13.2 V18.6 H10.3 V15.0 H13.2 Z" fill="url(#g32)" stroke="#4f8a0c" stroke-width="1.2" stroke-linejoin="round"/></svg>
<div style="left:1069px;top:698px;width:1px;height:26px;background:#d2d0cd;"></div>
<div style="left:1070px;top:698px;width:1px;height:26px;background:#f2f1ef;"></div>
<span class="t" style="left:1074.92px;top:702px;font-size:17px;line-height:20px;color:#2e2e2e;letter-spacing:0.366px;font-weight:normal;">New Image</span>
<div style="left:1045px;top:864px;width:234px;height:1px;background:#aca8a3;"></div>
<div style="left:1045px;top:865px;width:234px;height:36px;background:linear-gradient(#f1f0ee,#e6e5e2 60%,#dcdad7);"></div>
<svg style="left:1052.6px;top:874.6px" width="24" height="20" viewBox="0 0 24 20"><g transform="scale(0.74)"><path d="M1.6 11.7 L9.6 3.6 Q11 2.6 11 4.6 V8.2 H18.5 Q22.4 8.2 24.4 11.4 L27.4 16.3 Q28.6 18.8 26.2 20.2 Q23.6 21.3 22.2 19 L19.8 15.2 Q19.4 14.8 18.6 14.8 H11 V19 Q11 21 9.6 19.9 Z" fill="#dad7d3" stroke="#d2cfcb" stroke-width="1" stroke-linejoin="round"/></g></svg>
<svg style="left:1090.6px;top:874.6px" width="24" height="20" viewBox="0 0 24 20"><g transform="scale(0.74) translate(29.6,0) scale(-1,1)"><path d="M1.6 11.7 L9.6 3.6 Q11 2.6 11 4.6 V8.2 H18.5 Q22.4 8.2 24.4 11.4 L27.4 16.3 Q28.6 18.8 26.2 20.2 Q23.6 21.3 22.2 19 L19.8 15.2 Q19.4 14.8 18.6 14.8 H11 V19 Q11 21 9.6 19.9 Z" fill="#dcddd8" stroke="#d3d5cf" stroke-width="1" stroke-linejoin="round"/></g></svg>
</div></body></html>
